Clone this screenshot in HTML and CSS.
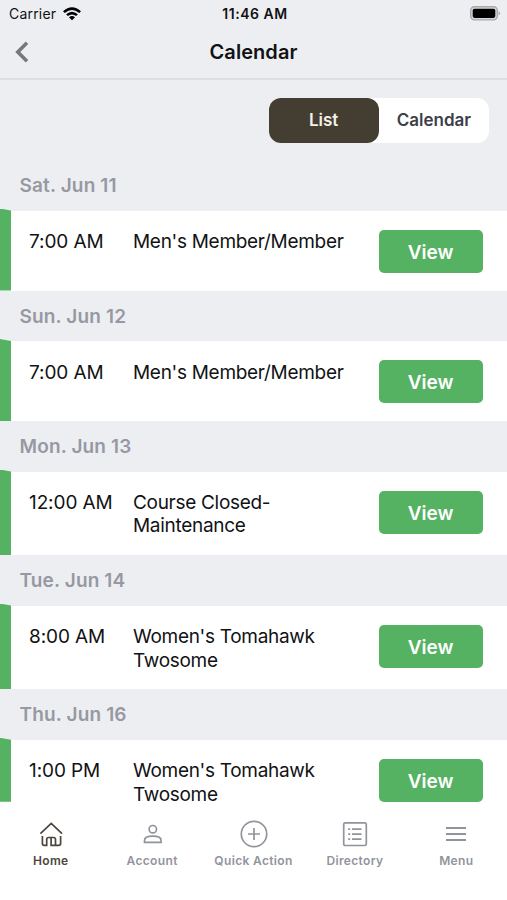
FILE: index.html
```html
<!DOCTYPE html>
<html lang="en">
<head>
<meta charset="utf-8">
<title>Calendar</title>
<link rel="stylesheet" href="styles.css">
</head>
<body>
<div class="app">
  <div class="status">
    <div class="carrier"><span>Carrier</span>
      <svg class="wifi" width="18" height="14" viewBox="0 0 18 14"><path d="M0 4.3Q9-3.7 18 4.3L16.2 6.1Q9-.3 1.8 6.1ZM3.1 7.3Q9 2.3 14.9 7.3L13.1 9.1Q9 5.7 4.9 9.1ZM6 10.2Q9 8 12 10.2L9 13.3Z"/></svg>
    </div>
    <div class="clock">11:46 AM</div>
    <div class="power"><svg width="31" height="15" viewBox="0 0 31 15"><rect x=".7" y=".7" width="26.6" height="13.2" rx="3.8" fill="#d8d8da" stroke="#a9a9ac" stroke-width="1.4"/><rect x="2.7" y="2.7" width="22.6" height="9.2" rx="1.8"/><path d="M28.6 5Q31.6 7.3 28.6 9.6Z" fill="#a9a9ac"/></svg></div>
  </div>
  <header class="nav">
    <svg class="back" width="14" height="22" viewBox="0 0 14 22"><path d="M12 1.8L2.8 11L12 20.2"/></svg>
    <h1>Calendar</h1>
  </header>
  <main class="content">
    <div class="switch"><button class="seg active">List</button><button class="seg">Calendar</button></div>
    <section>
      <h2>Sat. Jun 11</h2>
      <div class="event"><time>7:00 AM</time><p>Men's Member/Member</p><button class="view">View</button></div>
    </section>
    <section>
      <h2>Sun. Jun 12</h2>
      <div class="event"><time>7:00 AM</time><p>Men's Member/Member</p><button class="view">View</button></div>
    </section>
    <section>
      <h2>Mon. Jun 13</h2>
      <div class="event tall"><time>12:00 AM</time><p>Course Closed-<br>Maintenance</p><button class="view">View</button></div>
    </section>
    <section>
      <h2>Tue. Jun 14</h2>
      <div class="event tall"><time>8:00 AM</time><p>Women's Tomahawk<br>Twosome</p><button class="view">View</button></div>
    </section>
    <section>
      <h2>Thu. Jun 16</h2>
      <div class="event last"><time>1:00 PM</time><p>Women's Tomahawk<br>Twosome</p><button class="view">View</button></div>
    </section>
  </main>
  <nav class="tabs">
    <a class="tab current"><svg viewBox="0 0 28 28"><path d="M3.4 13.6L14.2 3.4L25 13.6M5.4 16V23.6Q5.4 25.4 7.2 25.4H9.7V19.5Q9.7 17.5 11.7 17.5H16.5Q18.5 17.5 18.5 19.5V25.4M14.1 17.5V25.4H21.8Q23.6 25.4 23.6 23.6V16"/></svg><span>Home</span></a>
    <a class="tab"><svg viewBox="0 0 28 28"><circle cx="14.8" cy="9.2" r="3.7"/><path d="M6.5 22.4V20.4C6.5 17.6 10 16.2 14.8 16.2S23.1 17.6 23.1 20.4V22.4Z"/></svg><span>Account</span></a>
    <a class="tab"><svg viewBox="0 0 28 28"><circle cx="14" cy="14" r="12.7"/><path d="M14 8V20M8 14H20"/></svg><span>Quick Action</span></a>
    <a class="tab"><svg viewBox="0 0 28 28"><rect x="2.7" y="2.9" width="22.6" height="22.6" rx="1.5"/><path d="M7.2 9.2H9.2M11 9.2H20.5M7.2 14.2H9.2M11 14.2H20.5M7.2 19.2H9.2M11 19.2H20.5"/></svg><span>Directory</span></a>
    <a class="tab"><svg class="bars" viewBox="0 0 28 28"><path d="M4 8H24M4 14H24M4 20H24"/></svg><span>Menu</span></a>
  </nav>
</div>
</body>
</html>
```
FILE: styles.css
```css
* { box-sizing: border-box; }
body { margin: 0; background: #fff; font-family: Inter, "Liberation Sans", sans-serif; color: #111214; }
h1, h2, p { margin: 0; }
button { border: 0; padding: 0; font: inherit; }
.app { display: flex; flex-direction: column; width: 507px; height: 900px; overflow: hidden; background: #edeef2; }
.status { display: grid; grid-template-columns: 1fr 1fr 1fr; align-items: center; height: 27px; flex: none; padding: 0 6px 0 9px; font-size: 14px; }
.carrier { display: flex; align-items: center; gap: 7px; letter-spacing: .2px; }
.wifi { display: block; }
.clock { text-align: center; font-weight: 600; letter-spacing: .55px; white-space: nowrap; }
.power { display: flex; justify-content: flex-end; }
.nav { display: grid; grid-template-columns: 32px 1fr 32px; align-items: center; height: 53px; flex: none; padding: 0 15px 1px; border-bottom: 2px solid #dddee1; }
.back { fill: none; stroke: #77787a; stroke-width: 3.6; }
h1 { text-align: center; font-size: 20px; font-weight: 600; letter-spacing: .05px; }
.content { flex: none; height: 722px; }
.switch { display: flex; width: 220.5px; height: 45px; margin: 17.5px 18px 17.5px auto; background: #fff; border-radius: 12px; }
.seg { width: 110.5px; border-radius: 12px; background: transparent; color: #3c3f49; font-size: 17px; font-weight: 600; }
.active { background: #443d31; color: #f4f0e6; }
h2 { height: 50.5px; line-height: 51px; padding-left: 19.5px; font-size: 19px; font-weight: 600; letter-spacing: .15px; color: #9699a2; }
.event { position: relative; display: grid; grid-template-columns: 104px 245.5px 104px; height: 80px; padding: 19.3px 0 0 29px; background: #fff; font-size: 19px; line-height: 23.3px; }
.event::before { content: ""; position: absolute; left: 0; top: -2px; bottom: 0; width: 11px; background: #55b262; clip-path: polygon(0 0, 100% 2px, 100% 100%, 0 100%); }
.event time { padding-top: .4px; letter-spacing: -.1px; }
.event p { padding-top: .4px; letter-spacing: -.3px; }
.tall { height: 83.6px; }
.last { height: 62px; }
.view { width: 104px; height: 43px; padding-top: 2px; border-radius: 5px; background: #55b262; color: #fff; font-size: 19px; font-weight: 600; }
.tabs { flex: 1; display: flex; background: #fff; padding-top: 18px; }
.tab { flex: 1; display: flex; flex-direction: column; align-items: center; gap: 5px; color: #92949c; font-size: 12px; line-height: 15px; font-weight: 600; letter-spacing: .35px; white-space: nowrap; }
.tab svg { width: 28px; height: 28px; fill: none; stroke: currentColor; stroke-width: 1.7; }
.tab .bars { stroke-width: 2; }
.current { color: #4d463c; }
```
